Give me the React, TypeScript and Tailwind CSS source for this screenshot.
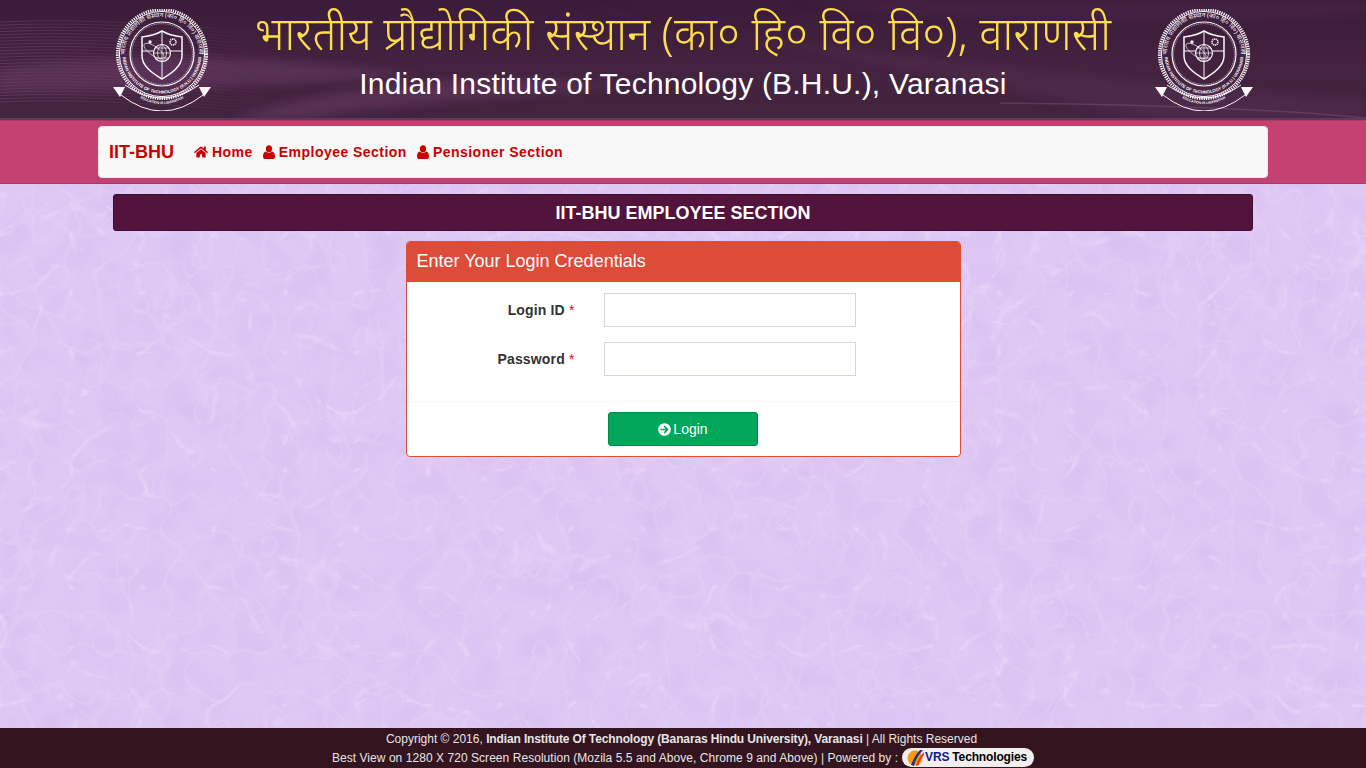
import { FaHome, FaArrowCircleRight } from "react-icons/fa";

const sans = "font-['Liberation_Sans',Arial,sans-serif]";

function UserIcon() {
  return (
    <svg width="12" height="14" viewBox="0 0 12 14" aria-hidden="true" className="shrink-0" fill="currentColor">
      <ellipse cx="6" cy="3.700" rx="3.100" ry="3.500" />
      <path d="M3 6.600C4.600 8.200 7.400 8.200 9 6.600C11 7 12 8.600 12 11.400C12 13 11 14 9.700 14H2.300C1 14 0 13 0 11.400C0 8.600 1 7 3 6.600Z" />
    </svg>
  );
}

function Texture() {
  return (
    <svg className="absolute inset-0 h-full w-full" aria-hidden="true">
      <defs>
        <filter id="mott" x="0" y="0" width="100%" height="100%" colorInterpolationFilters="sRGB">
          <feTurbulence type="fractalNoise" baseFrequency="0.03" numOctaves="3" seed="7" />
          <feColorMatrix values="0 0 0 0 0.79  0 0 0 0 0.68  0 0 0 0 0.91  1.3 1.3 0 0 -1.15" />
        </filter>
        <filter id="veins" x="0" y="0" width="100%" height="100%" colorInterpolationFilters="sRGB">
          <feTurbulence type="turbulence" baseFrequency="0.014 0.017" numOctaves="2" seed="11" />
          <feColorMatrix values="0 0 0 0 0.925  0 0 0 0 0.87  0 0 0 0 0.985  -13 0 0 0 1.05" />
          <feGaussianBlur stdDeviation="0.4" />
        </filter>
        <filter id="veins2" x="0" y="0" width="100%" height="100%" colorInterpolationFilters="sRGB">
          <feTurbulence type="turbulence" baseFrequency="0.03 0.026" numOctaves="1" seed="23" />
          <feColorMatrix values="0 0 0 0 0.91  0 0 0 0 0.84  0 0 0 0 0.975  -16 0 0 0 0.95" />
        </filter>
      </defs>
      <rect width="100%" height="100%" fill="#dec8f4" />
      <rect width="100%" height="100%" filter="url(#mott)" opacity="0.3" />
      <rect width="100%" height="100%" filter="url(#veins2)" opacity="0.35" />
      <rect width="100%" height="100%" filter="url(#veins)" opacity="0.45" />
    </svg>
  );
}

function HeaderWaves() {
  const lines = Array.from({ length: 26 }, (_, i) => 22 + i * 3.2);
  return (
    <svg className="absolute inset-0 h-full w-full" viewBox="0 0 1366 120" preserveAspectRatio="none" aria-hidden="true">
      <defs>
        <linearGradient id="hbg" x1="0" y1="0" x2="0" y2="1">
          <stop offset="0" stopColor="#3a1b39" />
          <stop offset="0.55" stopColor="#43233f" />
          <stop offset="1" stopColor="#42243f" />
        </linearGradient>
        <linearGradient id="fadeL" x1="0" x2="1" y1="0" y2="0">
          <stop offset="0" stopColor="#8a5a86" stopOpacity="0.35" />
          <stop offset="1" stopColor="#8a5a86" stopOpacity="0" />
        </linearGradient>
        <filter id="soft"><feGaussianBlur stdDeviation="5" /></filter>
      </defs>
      <rect width="1366" height="120" fill="url(#hbg)" />
      {lines.map((y, i) => (
        <path key={i} d={`M0 ${y}C90 ${y - 4} 170 ${y + 3} 290 ${y + 12}`} stroke="url(#fadeL)" strokeWidth="1" fill="none" />
      ))}
      <path d="M0 70C120 50 260 55 420 75C300 85 130 90 0 92Z" fill="#6b3a68" opacity="0.55" filter="url(#soft)" />
      <path d="M230 120C330 85 470 70 620 85C500 100 360 105 300 120Z" fill="#6d3c6b" opacity="0.5" filter="url(#soft)" />
      <path d="M560 0C700 35 980 70 1366 100V120H1150C1000 85 800 50 560 0Z" fill="#5a3158" opacity="0.38" filter="url(#soft)" />
      <path d="M800 0C900 20 1150 30 1366 15V0Z" fill="#4c264b" opacity="0.5" filter="url(#soft)" />
      <path d="M1000 103C1120 104 1260 108 1366 118" stroke="#a77ba4" strokeWidth="1.5" opacity="0.25" fill="none" />
      <path d="M0 119H1366" stroke="#5c3a59" strokeWidth="2" />
    </svg>
  );
}

function Seal({ id }: { id: string }) {
  const white = "#fbf7fb";
  return (
    <svg width="100" height="102" viewBox="0 0 100 102" className="shrink-0" aria-label="IIT BHU seal">
      <defs>
        <path id={`${id}-top`} d="M13 45A37 37 0 0 1 87 45" />
        <path id={`${id}-bot`} d="M10.500 45A39.500 39.500 0 0 0 89.500 45" />
        <path id={`${id}-rib`} d="M15 80Q50 110 85 80" />
      </defs>
      <circle cx="50" cy="45" r="44.600" fill="none" stroke={white} strokeWidth="3" strokeDasharray="1.3 1" />
      <circle cx="50" cy="45" r="42.600" fill="none" stroke={white} strokeWidth="1" />
      <circle cx="50" cy="45" r="32" fill="none" stroke={white} strokeWidth="1.2" />
      <circle cx="50" cy="45" r="30.400" fill="none" stroke={white} strokeWidth="0.6" strokeDasharray="1 .8" />
      <text fill={white} fontSize="6.400" fontFamily="Noto Sans, Liberation Sans, sans-serif">
        <textPath href={`#${id}-top`} startOffset="50%" textAnchor="middle">भारतीय प्रौद्योगिकी संस्थान (का० हि० वि०) वाराणसी</textPath>
      </text>
      <text fill={white} fontSize="4.300" fontWeight="700" fontFamily="Liberation Sans, sans-serif">
        <textPath href={`#${id}-bot`} startOffset="50%" textAnchor="middle">INDIAN INSTITUTE OF TECHNOLOGY (B.H.U.) VARANASI</textPath>
      </text>
      <path d="M30 28C38 27 45 25 50 22C55 25 62 27 70 28V47C70 57 60 64 50 70C40 64 30 57 30 47Z" fill="none" stroke={white} strokeWidth="1.500" />
      <path d="M50 22V70M30 42H70" stroke={white} strokeWidth="1" />
      <circle cx="50" cy="44" r="8.500" fill="#42213f" stroke={white} strokeWidth="1.200" />
      <path d="M41.500 44H58.500M50 35.500V52.500M43.500 39H56.500M43.500 49H56.500M50 35.500C44 40 44 48 50 52.500C56 48 56 40 50 35.500" fill="none" stroke={white} strokeWidth="0.700" />
      <ellipse cx="42" cy="42" rx="12" ry="4.500" transform="rotate(35 42 42)" fill="none" stroke={white} strokeWidth="0.600" />
      <circle cx="61" cy="33" r="3" fill="none" stroke={white} strokeWidth="1.600" strokeDasharray="1.200 .6" />
      <circle cx="38" cy="33" r="1.700" fill={white} />
      <path d="M1 78L13 78L8 88Z M99 78L87 78L92 88Z" fill={white} />
      <path d="M9 86Q50 118 91 86M13 76Q50 102 87 76" fill="none" stroke={white} strokeWidth="1" />
      <text fill={white} fontSize="3.400" fontWeight="700" fontFamily="Liberation Sans, sans-serif">
        <textPath href={`#${id}-rib`} startOffset="50%" textAnchor="middle">EDUCATION IS LIBERATION</textPath>
      </text>
    </svg>
  );
}

function VrsLogo() {
  return (
    <svg width="18" height="16" viewBox="0 0 18 16" aria-hidden="true" className="shrink-0">
      <circle cx="8" cy="8" r="7.500" fill="#f59a16" />
      <path d="M4 15C6 10 9 4 13 0H16C11 5 8 11 7 16Z" fill="#26307f" />
      <path d="M9 16C10 11 13 6 17 2V5C14 8 12 12 12 15Z" fill="#e23b22" />
    </svg>
  );
}

export default function App() {
  return (
    <div className={`relative flex h-[768px] w-full flex-col overflow-hidden ${sans}`}>
      <Texture />

      <header className="relative h-[120px] shrink-0">
        <HeaderWaves />
        <div className="relative mx-auto flex h-full w-[1140px] items-start justify-between pt-[9px]">
          <div className="-ml-[1px]"><Seal id="sl" /></div>
          <div className="flex flex-col items-center">
            <div className="h-[50px] origin-top scale-y-[1.05] text-[44.4px] leading-[44px] font-light text-[#fddc4e] font-['Noto_Sans','Noto_Sans_Devanagari','Liberation_Sans',sans-serif] whitespace-nowrap">
              भारतीय प्रौद्योगिकी संस्थान (का० हि० वि० वि०), वाराणसी
            </div>
            <div className="mt-[8px] text-[30px] leading-[34px] tracking-[0.2px] text-white whitespace-nowrap">
              Indian Institute of Technology (B.H.U.), Varanasi
            </div>
          </div>
          <div className="-mr-[1px]"><Seal id="sr" /></div>
        </div>
      </header>

      <div className="relative h-[64px] shrink-0 border-y border-[#a33a60] bg-[#c54172] pt-[5px]">
        <nav className="mx-auto flex h-[52px] w-[1170px] items-center rounded border border-[#e7e7e7] bg-[#f8f8f8] px-[10px] text-[#cc0000]">
          <span className="text-[18px] font-bold">IIT-BHU</span>
          <div className="ml-[20px] flex items-center gap-[10px] text-[14px] font-bold tracking-[0.47px]">
            <a className="flex items-center gap-[4px]"><FaHome className="text-[14px]" />Home</a>
            <a className="flex items-center gap-[4px]"><UserIcon />Employee Section</a>
            <a className="flex items-center gap-[4px]"><UserIcon />Pensioner Section</a>
          </div>
        </nav>
      </div>

      <main className="relative mx-auto flex w-[1140px] flex-1 flex-col items-center pt-[10px]">
        <h1 className="flex h-[37px] w-full items-center justify-center rounded-[3px] border border-[#3f0e2d] bg-[#52133c] pt-[1px] text-[18px] font-bold text-white">
          IIT-BHU EMPLOYEE SECTION
        </h1>

        <section className="mt-[10px] w-[555px] overflow-hidden rounded border border-[#dd4b39] bg-white">
          <div className="flex h-[40px] items-center bg-[#dd4b39] px-[10px] pb-[2px] text-[18px] text-white">
            Enter Your Login Credentials
          </div>
          <form className="text-[14px] font-bold tracking-[0.15px] text-[#333333]">
            <div className="flex flex-col gap-[15px] px-[10px] pt-[11px] pb-[25px]">
              <div className="flex items-center">
                <label className="w-[158px] text-right">Login ID <span className="font-normal text-[#ff0000]">*</span></label>
                <input aria-label="Login ID" className="ml-[29px] h-[34px] w-[252px] border border-[#d2d6de] bg-white" />
              </div>
              <div className="flex items-center">
                <label className="w-[158px] text-right">Password <span className="font-normal text-[#ff0000]">*</span></label>
                <input aria-label="Password" type="password" className="ml-[29px] h-[34px] w-[252px] border border-[#d2d6de] bg-white" />
              </div>
            </div>
            <div className="flex h-[55px] items-center justify-center border-t border-[#f4f4f4]">
              <button type="button" className="flex h-[34px] w-[150px] items-center justify-center gap-[2px] rounded-[3px] border border-[#008d4c] bg-[#00a65a] text-[14px] font-normal tracking-normal text-white">
                <FaArrowCircleRight className="text-[13px]" />Login
              </button>
            </div>
          </form>
        </section>
      </main>

      <footer className="relative flex h-[40px] shrink-0 flex-col items-center bg-[#33141f] pt-[2px] text-[12px] leading-[19px] text-[#e6e6e6]">
        <div className="pr-[3px]">
          Copyright © 2016, <b className="tracking-[-0.13px]">Indian Institute Of Technology (Banaras Hindu University), Varanasi</b> | All Rights Reserved
        </div>
        <div className="flex items-start">
          <span className="tracking-[0.05px]">Best View on 1280 X 720 Screen Resolution (Mozila 5.5 and Above, Chrome 9 and Above) | Powered by :</span>
          <span className="-mt-[1px] ml-[4px] flex h-[19px] w-[132px] items-center rounded-full bg-[#f3eeee] pl-[5px] text-[12px] font-bold tracking-[-0.15px] text-black">
            <VrsLogo /><span className="text-[#0b1a8c]">VRS</span><span className="ml-[3px]">Technologies</span>
          </span>
        </div>
      </footer>
    </div>
  );
}
